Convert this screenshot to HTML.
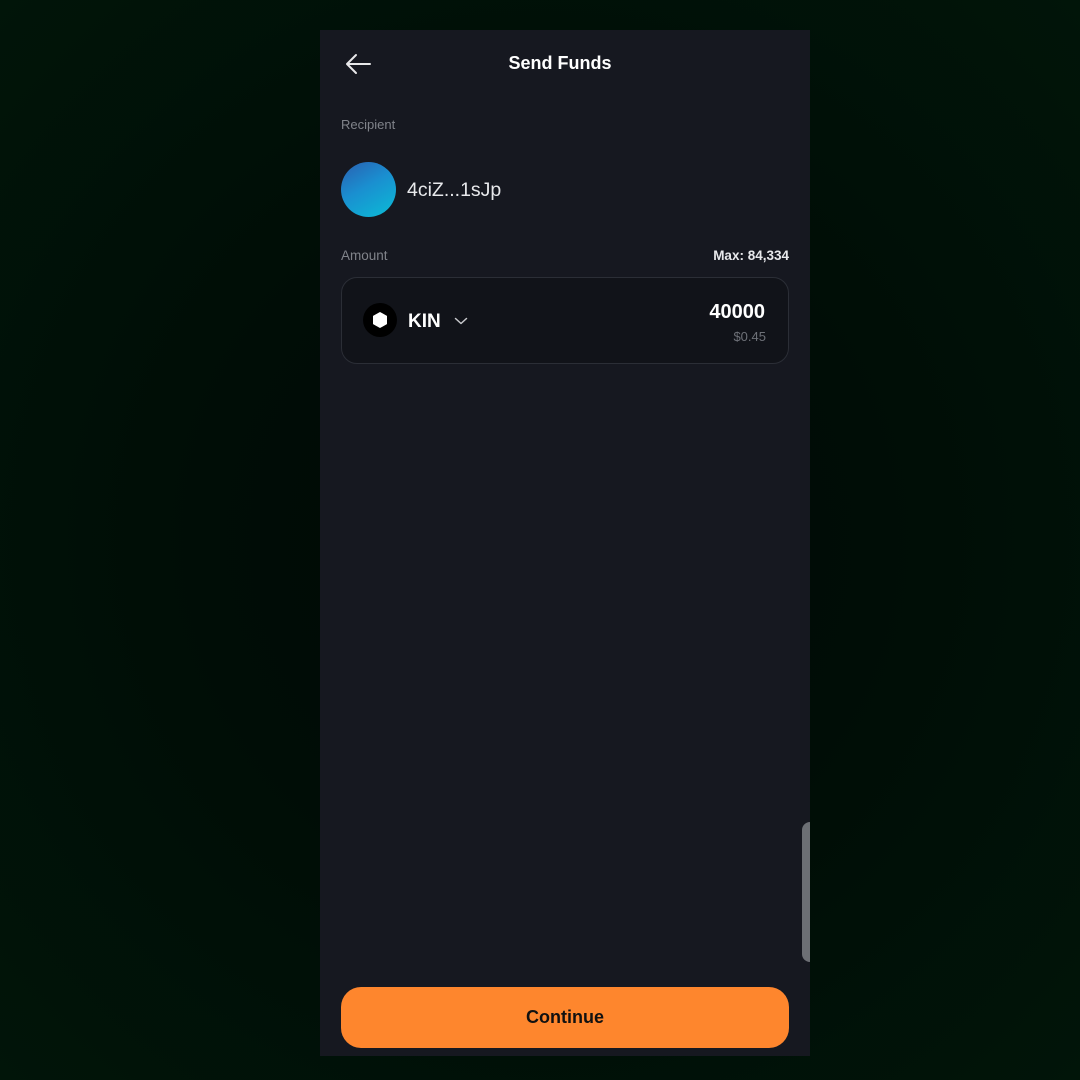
<!DOCTYPE html>
<html><head><meta charset="utf-8"><style>
*{margin:0;padding:0;box-sizing:border-box}
html,body{width:1080px;height:1080px;overflow:hidden}
body{background:radial-gradient(ellipse at 50% 50%,#000a04 0%,#000d06 45%,#011509 100%);font-family:"Liberation Sans",sans-serif;position:relative}
.panel{position:absolute;left:320px;top:30px;width:490px;height:1026px;background:#161820;overflow:hidden}
.abs{position:absolute}
.title{width:480px;top:23px;text-align:center;color:#fff;font-weight:bold;font-size:18px}
.lbl{color:#80838a;font-size:13px}
.card{left:21px;top:247px;width:448px;height:87px;border:1px solid #2b2e36;border-radius:16px;background:#111319}
.btn{left:21px;top:957px;width:448px;height:61px;border-radius:20px;background:#fe862d;color:#111;font-weight:bold;font-size:18px;text-align:center;line-height:61px}
.sb{left:482px;top:792px;width:10px;height:140px;background:#6c6f74;border-radius:8px 0 0 8px}
</style></head><body>
<div class="panel">
<svg class="abs" style="left:24px;top:23px" width="28" height="22" viewBox="0 0 28 22"><path d="M26 11H3M12 2L3 11l9 9" fill="none" stroke="#e8e8ea" stroke-width="2" stroke-linecap="round" stroke-linejoin="round"/></svg>
<div class="abs title" style="left:0">Send Funds</div>
<div class="abs lbl" style="left:21px;top:87px">Recipient</div>
<div class="abs" style="left:21px;top:132px;width:55px;height:55px;border-radius:50%;background:linear-gradient(150deg,#2a5fb0 0%,#1a8fd0 45%,#0bbcd6 100%)"></div>
<div class="abs" style="left:87px;top:149px;color:#e8e9ec;font-size:19.5px">4ciZ...1sJp</div>
<div class="abs lbl" style="left:21px;top:218px;font-size:13.5px">Amount</div>
<div class="abs" style="right:21px;top:218px;color:#e8e9ec;font-size:13.5px;font-weight:bold">Max: 84,334</div>
<div class="abs card">
<div class="abs" style="left:21px;top:25px;width:34px;height:34px;border-radius:50%;background:#000"></div>
<svg class="abs" style="left:29px;top:33px" width="18" height="18" viewBox="0 0 18 18"><path d="M9 1.5L15.5 5.2V12.8L9 16.5L2.5 12.8V5.2Z" fill="#fff" stroke="#fff" stroke-width="1" stroke-linejoin="round"/></svg>
<div class="abs" style="left:66px;top:33px;color:#fff;font-weight:bold;font-size:19px">KIN</div>
<svg class="abs" style="left:112px;top:38px" width="14" height="10" viewBox="0 0 14 10"><path d="M1.5 2.5L7 7.5l5.5-5" fill="none" stroke="#c8c9cc" stroke-width="1.5" stroke-linecap="round" stroke-linejoin="round"/></svg>
<div class="abs" style="right:23px;top:23px;color:#fff;font-weight:bold;font-size:20px">40000</div>
<div class="abs" style="right:22px;top:51px;color:#6e7178;font-size:13px">$0.45</div>
</div>
<div class="abs sb"></div>
<div class="abs btn">Continue</div>
</div>
</body></html>
